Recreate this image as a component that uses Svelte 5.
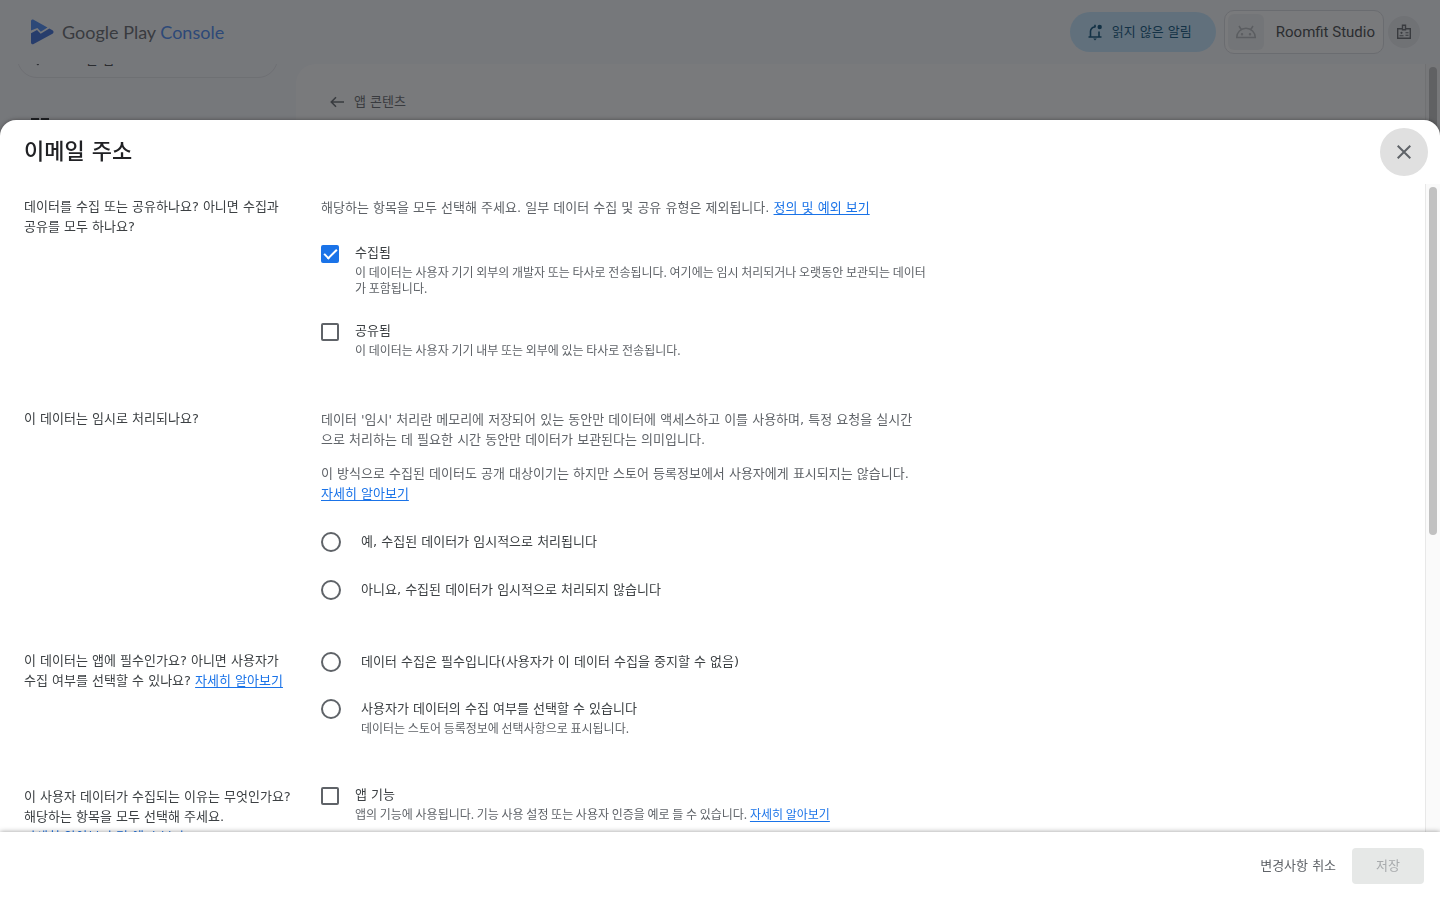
<script lang="ts">
  type Option = { id: string; title: string; desc?: string };

  let collected = $state(true);
  let shared = $state(false);
  let appFeature = $state(false);
  let ephemeral = $state('');
  let required = $state('');

  const ephemeralOptions: Option[] = [
    { id: 'yes', title: '예, 수집된 데이터가 임시적으로 처리됩니다' },
    { id: 'no', title: '아니요, 수집된 데이터가 임시적으로 처리되지 않습니다' }
  ];

  const requiredOptions: Option[] = [
    { id: 'required', title: '데이터 수집은 필수입니다(사용자가 이 데이터 수집을 중지할 수 없음)' },
    {
      id: 'optional',
      title: '사용자가 데이터의 수집 여부를 선택할 수 있습니다',
      desc: '데이터는 스토어 등록정보에 선택사항으로 표시됩니다.'
    }
  ];
</script>

<div class="app">
  <header class="topbar">
    <a class="logo" href="#home">
      <svg width="24" height="26" viewBox="0 0 24 26" aria-hidden="true">
        <path fill="#4285f4" d="M1 11.500V2.200C1 .8 2.400.1 3.600.8L17.500 8.400l-6.700 4.300-3.400-3.600z" />
        <path fill="#3367d6" d="M1 14.300l6-3.300 3.700 3.700 8.600-5.300 3.200 1.900c1.400.8 1.400 2.600 0 3.400L3.600 25.100C2.400 25.800 1 25 1 23.600z" />
      </svg>
      <span class="brand">Google Play <em>Console</em></span>
    </a>

    <div class="actions">
      <button type="button" class="inbox">
        <svg width="18" height="18" viewBox="0 0 18 18" fill="none" stroke="currentColor" stroke-width="1.600" aria-hidden="true">
          <path d="M2.500 14h13M4.500 14V8.300a4.300 4.300 0 0 1 4.800-4.200M13 8.500V14" />
          <path d="M9 1.800v2.500" />
          <circle cx="13.700" cy="4" r="2.200" fill="currentColor" stroke="none" />
          <path d="M7.200 15.600h3.600L9 17.600z" fill="currentColor" stroke="none" />
        </svg>
        읽지 않은 알림
      </button>
      <button type="button" class="account">
        <span class="avatar">
          <svg width="22" height="14" viewBox="0 0 22 14" fill="none" stroke="#b4b7bb" stroke-width="1.500" aria-hidden="true">
            <path d="M1.700 12.500a9.300 9.300 0 0 1 18.600 0zM6.500 5L4 1M15.500 5L18 1" />
            <circle cx="7" cy="9.300" r=".5" /><circle cx="15" cy="9.300" r=".5" />
          </svg>
        </span>
        Roomfit Studio
      </button>
      <button type="button" class="badge" aria-label="개발자 계정">
        <svg width="16" height="16" viewBox="0 0 16 16" fill="none" stroke="currentColor" stroke-width="1.400" aria-hidden="true">
          <path d="M6 4.700H1.700v9.600h12.600V4.700H10" />
          <path d="M6.500 1.300h3v4.400h-3z" />
          <circle cx="5.500" cy="8.800" r="1.100" fill="currentColor" stroke="none" />
          <path d="M3.500 11.700h4M9.500 8.800h3M9.500 11.300h3" stroke-width="1.100" />
        </svg>
      </button>
    </div>
  </header>

  <div class="workspace">
    <nav class="sidebar">
      <a class="all-apps" href="#apps">
        <svg width="14" height="20" viewBox="0 0 14 20" fill="none" stroke="currentColor" stroke-width="1.600" aria-hidden="true">
          <path d="M14 10H1.500M6.500 5l-5 5 5 5" />
        </svg>
        모든 앱
      </a>
      <a class="dashboard" href="#dashboard" aria-label="대시보드">
        <svg width="18" height="18" viewBox="0 0 18 18" fill="none" stroke="currentColor" stroke-width="2" aria-hidden="true">
          <path d="M1 1h6v8H1zM11 1h6v4h-6zM11 9h6v8h-6zM1 13h6v4H1z" />
        </svg>
      </a>
    </nav>
    <main class="page">
      <a class="back" href="#content">
        <svg width="14" height="12" viewBox="0 0 14 12" fill="none" stroke="currentColor" stroke-width="1.600" aria-hidden="true">
          <path d="M14 6H1.500M6 1.300L1.300 6 6 10.700" />
        </svg>
        앱 콘텐츠
      </a>
    </main>
    <div class="track"><div class="thumb"></div></div>
  </div>
</div>

<div class="scrim"></div>

<div class="sheet" role="dialog" aria-modal="true" aria-labelledby="sheet-title">
  <header class="sheet-head">
    <h1 id="sheet-title">이메일 주소</h1>
    <button type="button" class="close" aria-label="닫기">
      <svg width="14" height="14" viewBox="0 0 14 14" fill="none" stroke="currentColor" stroke-width="2" aria-hidden="true">
        <path d="M.7.7l12.600 12.600M13.300.7L.7 13.300" />
      </svg>
    </button>
  </header>

  <div class="sheet-body">
    <form class="form" id="data-form">
      <section class="row">
        <h2>데이터를 수집 또는 공유하나요? 아니면 수집과 공유를 모두 하나요?</h2>
        <div class="field">
          <div class="intro">
            <p>해당하는 항목을 모두 선택해 주세요. 일부 데이터 수집 및 공유 유형은 제외됩니다. <a href="#definitions">정의 및 예외 보기</a></p>
          </div>
          <div class="checks">
            <div class="option">
              <input type="checkbox" id="collected" bind:checked={collected}>
              <div>
                <label for="collected">수집됨</label>
                <p class="desc">이 데이터는 사용자 기기 외부의 개발자 또는 타사로 전송됩니다. 여기에는 임시 처리되거나 오랫동안 보관되는 데이터<br>가 포함됩니다.</p>
              </div>
            </div>
            <div class="option">
              <input type="checkbox" id="shared" bind:checked={shared}>
              <div>
                <label for="shared">공유됨</label>
                <p class="desc">이 데이터는 사용자 기기 내부 또는 외부에 있는 타사로 전송됩니다.</p>
              </div>
            </div>
          </div>
        </div>
      </section>

      <section class="row">
        <h2>이 데이터는 임시로 처리되나요?</h2>
        <div class="field">
          <div class="intro wide">
            <p>데이터 '임시' 처리란 메모리에 저장되어 있는 동안만 데이터에 액세스하고 이를 사용하며, 특정 요청을 실시간<br>으로 처리하는 데 필요한 시간 동안만 데이터가 보관된다는 의미입니다.</p>
            <p>이 방식으로 수집된 데이터도 공개 대상이기는 하지만 스토어 등록정보에서 사용자에게 표시되지는 않습니다. <a href="#ephemeral">자세히 알아보기</a></p>
          </div>
          <div class="radios">
            {#each ephemeralOptions as o (o.id)}
              <div class="option">
                <input type="radio" name="ephemeral" id="eph-{o.id}" value={o.id} bind:group={ephemeral}>
                <label for="eph-{o.id}">{o.title}</label>
              </div>
            {/each}
          </div>
        </div>
      </section>

      <section class="row">
        <h2>이 데이터는 앱에 필수인가요? 아니면 사용자가 수집 여부를 선택할 수 있나요? <a href="#required">자세히 알아보기</a></h2>
        <div class="field">
          <div class="radios top">
            {#each requiredOptions as o (o.id)}
              <div class="option">
                <input type="radio" name="required" id="req-{o.id}" value={o.id} bind:group={required}>
                <div>
                  <label for="req-{o.id}">{o.title}</label>
                  {#if o.desc}<p class="desc">{o.desc}</p>{/if}
                </div>
              </div>
            {/each}
          </div>
        </div>
      </section>

      <section class="row">
        <h2>이 사용자 데이터가 수집되는 이유는 무엇인가요? 해당하는 항목을 모두 선택해 주세요.<br><a href="#reasons">자세히 알아보기 및 예시 보기</a></h2>
        <div class="field">
          <div class="checks">
            <div class="option">
              <input type="checkbox" id="feature" bind:checked={appFeature}>
              <div>
                <label for="feature">앱 기능</label>
                <p class="desc">앱의 기능에 사용됩니다. 기능 사용 설정 또는 사용자 인증을 예로 들 수 있습니다. <a href="#feature">자세히 알아보기</a></p>
              </div>
            </div>
          </div>
        </div>
      </section>
    </form>
    <div class="track"><div class="thumb"></div></div>
  </div>

  <footer class="sheet-foot">
    <button type="reset" form="data-form" class="cancel">변경사항 취소</button>
    <button type="submit" form="data-form" class="save" disabled>저장</button>
  </footer>
</div>

<style>
:global(body){margin:0;background:#f8f9fd;font-family:"DejaVu Sans","Noto Sans CJK KR",sans-serif;font-size:13px;line-height:20px;color:#202124;overflow:hidden}
button{font:inherit;border:0;padding:0;background:none;cursor:pointer}
h1,h2,p{margin:0}
svg{display:block;flex:none}

.app{height:100vh;display:flex;flex-direction:column}
.topbar{height:64px;flex:none;box-sizing:border-box;display:flex;align-items:center;justify-content:space-between;padding:0 20px 0 30px}
.logo{display:flex;align-items:center;gap:8px;text-decoration:none}
.brand{font-family:Lato,sans-serif;font-size:18px;line-height:24px;color:#5f6368}
.brand em{font-style:normal;color:#4285f4}
.actions{display:flex;align-items:center}
.inbox{height:40px;display:flex;align-items:center;gap:8px;padding:0 24px 0 16px;margin-right:8px;border-radius:20px;background:#c2e7ff;color:#004a77}
.account{height:44px;display:flex;align-items:center;gap:12px;padding:0 8px 0 3px;margin-right:4px;border:1px solid #dadce0;border-radius:10px;background:#fff;color:#3c4043;font-family:Roboto,sans-serif;font-size:15px}
.avatar{width:36px;height:36px;display:grid;place-items:center;border-radius:6px;background:#f1f3f4}
.badge{width:32px;height:32px;display:grid;place-items:center;border-radius:50%;background:#e8eaed;color:#5f6368}

.workspace{flex:1;min-height:0;display:flex;overflow:hidden}
.sidebar{width:296px;flex:none;overflow:hidden}
.all-apps{height:44px;box-sizing:border-box;display:flex;align-items:flex-end;gap:28px;margin:-30px 18px 0 17px;padding:0 0 7px 14px;border:1px solid #e3e5e9;border-radius:20px;color:#3c4043;text-decoration:none}
.dashboard{display:block;margin:40px 0 0 31px;color:#202124}
.page{flex:1;background:#fff;border-radius:20px 0 0 0;padding:28px 34px}
.back{display:inline-flex;align-items:center;gap:10px;color:#5f6368;text-decoration:none}

.track{width:14px;flex:none;border-left:1px solid #e8e8e8;background:#fafafa;padding-top:3px}
.thumb{width:8px;height:54%;margin-left:3px;border-radius:4px;background:#c1c1c1}

.scrim{position:fixed;inset:0;background:rgba(32,33,36,.6)}
.sheet{position:fixed;inset:120px 0 0;display:flex;flex-direction:column;background:#fff;border-radius:16px 16px 0 0;box-shadow:0 0 4px rgba(0,0,0,.4);overflow:hidden}
.sheet-head{height:64px;flex:none;display:flex;align-items:center;justify-content:space-between;padding:0 12px 0 24px}
.sheet-head h1{font-size:22px;line-height:32px;font-weight:500}
.close{width:48px;height:48px;display:grid;place-items:center;border-radius:50%;background:#e0e0e0;color:#5f6368}

.sheet-body{flex:1;min-height:0;display:flex}
.form{flex:1;overflow:hidden;display:flex;flex-direction:column;gap:49px;padding:11px 24px 0}
.row{display:grid;grid-template-columns:273px minmax(0,610px);gap:24px}
.row h2{font-size:13px;line-height:20px;font-weight:400;color:#3c4043;padding-top:2px;word-break:keep-all}
a{color:#1a73e8}
.row a{white-space:nowrap;text-underline-offset:2px}
.intro{padding-top:3px;margin-bottom:25px;color:#5f6368}
.intro p+p{margin-top:14px}
.intro.wide{margin-bottom:28px}
.checks,.radios{display:flex;flex-direction:column;gap:25px}
.radios{gap:28px}
.radios.top{gap:27px;padding-top:3px}
.option{display:flex;align-items:flex-start;gap:16px}
.radios .option{gap:20px}
.option label{display:block;color:#3c4043}
.desc{margin-top:1px;font-family:"Noto Sans CJK KR",sans-serif;font-size:12px;line-height:16px;color:#5f6368}

input{appearance:none;margin:0;flex:none;box-sizing:border-box;border:2px solid #5f6368;background:#fff}
input[type="checkbox"]{width:18px;height:18px;margin-top:2px;border-radius:2px;display:grid;place-items:center}
input[type="checkbox"]:checked{background:#1a73e8;border-color:#1a73e8}
input[type="checkbox"]:checked::after{content:"";width:11px;height:5px;margin-top:-4px;border:solid #fff;border-width:0 0 2px 2px;transform:rotate(-45deg)}
input[type="radio"]{width:20px;height:20px;border-radius:50%}
input[type="radio"]:checked{background:radial-gradient(#1a73e8 5px,#fff 6px);border-color:#1a73e8}

.sheet-foot{position:relative;height:68px;flex:none;display:flex;align-items:center;justify-content:flex-end;gap:16px;padding:0 16px;background:#fff;box-shadow:0 0 5px rgba(0,0,0,.4)}
.cancel{color:#5f6368}
.save{height:36px;padding:0 24px;border-radius:4px;background:#e6e8e7;color:#a8abad;cursor:default}
</style>
